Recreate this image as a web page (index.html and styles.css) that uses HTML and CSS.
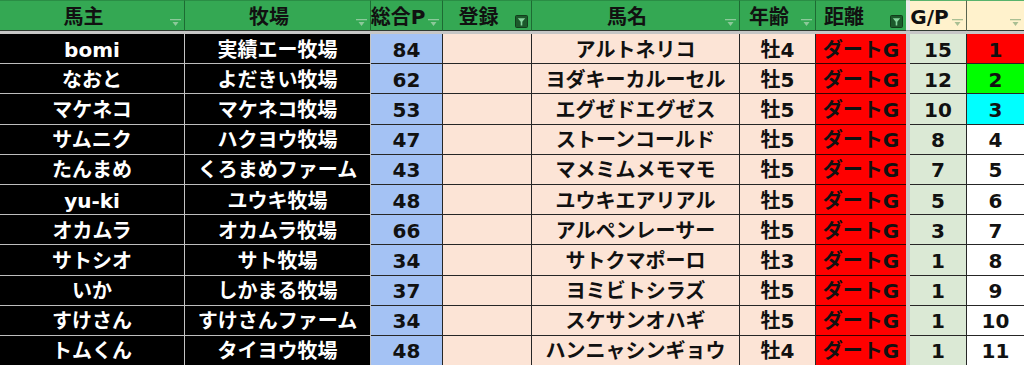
FILE: index.html
```html
<!DOCTYPE html>
<html lang="ja">
<head>
<meta charset="utf-8">
<title>馬主一覧</title>
<link rel="stylesheet" href="styles.css">
</head>
<body>
<div class="sheet">
  <div class="hdr">
    <div class="h g">馬主<svg class="flt" viewBox="0 0 11 8"><rect x="0" y="0" width="11" height="1.3"/><path d="M2.5 3 H8.5 L5.5 7 Z"/></svg></div>
    <div class="h g">牧場<svg class="flt" viewBox="0 0 11 8"><rect x="0" y="0" width="11" height="1.3"/><path d="M2.5 3 H8.5 L5.5 7 Z"/></svg></div>
    <div class="h g">総合P<svg class="flt" viewBox="0 0 11 8"><rect x="0" y="0" width="11" height="1.3"/><path d="M2.5 3 H8.5 L5.5 7 Z"/></svg></div>
    <div class="h g">登録<svg class="btn" viewBox="0 0 13 13"><rect x="0.5" y="0.5" width="12" height="12" rx="1"/><path class="fn" d="M2.8 3.2 H10.2 L7.3 6.8 V10.4 H5.7 V6.8 Z"/></svg></div>
    <div class="h g">馬名<svg class="flt" viewBox="0 0 11 8"><rect x="0" y="0" width="11" height="1.3"/><path d="M2.5 3 H8.5 L5.5 7 Z"/></svg></div>
    <div class="h g">年齢<svg class="flt" viewBox="0 0 11 8"><rect x="0" y="0" width="11" height="1.3"/><path d="M2.5 3 H8.5 L5.5 7 Z"/></svg></div>
    <div class="h g wide">距離<svg class="btn" viewBox="0 0 13 13"><rect x="0.5" y="0.5" width="12" height="12" rx="1"/><path class="fn" d="M2.8 3.2 H10.2 L7.3 6.8 V10.4 H5.7 V6.8 Z"/></svg></div>
    <div class="h gap"></div>
    <div class="h c">G/P<svg class="flt" viewBox="0 0 11 8"><rect x="0" y="0" width="11" height="1.3"/><path d="M2.5 3 H8.5 L5.5 7 Z"/></svg></div>
    <div class="h c last"><svg class="flt" viewBox="0 0 11 8"><rect x="0" y="0" width="11" height="1.3"/><path d="M2.5 3 H8.5 L5.5 7 Z"/></svg></div>
  </div>
  <div class="band"></div>

  <div class="row"><div class="d k">bomi</div><div class="d k">実績エー牧場</div><div class="d b">84</div><div class="d p"></div><div class="d p">アルトネリコ</div><div class="d p">牡4</div><div class="d r">ダートG</div><div class="d gap"></div><div class="d gp">15</div><div class="d rk red">1</div></div>
  <div class="row"><div class="d k">なおと</div><div class="d k">よだきい牧場</div><div class="d b">62</div><div class="d p"></div><div class="d p">ヨダキーカルーセル</div><div class="d p">牡5</div><div class="d r">ダートG</div><div class="d gap"></div><div class="d gp">12</div><div class="d rk grn">2</div></div>
  <div class="row"><div class="d k">マケネコ</div><div class="d k">マケネコ牧場</div><div class="d b">53</div><div class="d p"></div><div class="d p">エグゼドエグゼス</div><div class="d p">牡5</div><div class="d r">ダートG</div><div class="d gap"></div><div class="d gp">10</div><div class="d rk cyn">3</div></div>
  <div class="row"><div class="d k">サムニク</div><div class="d k">ハクヨウ牧場</div><div class="d b">47</div><div class="d p"></div><div class="d p">ストーンコールド</div><div class="d p">牡5</div><div class="d r">ダートG</div><div class="d gap"></div><div class="d gp">8</div><div class="d rk">4</div></div>
  <div class="row"><div class="d k">たんまめ</div><div class="d k">くろまめファーム</div><div class="d b">43</div><div class="d p"></div><div class="d p">マメミムメモマモ</div><div class="d p">牡5</div><div class="d r">ダートG</div><div class="d gap"></div><div class="d gp">7</div><div class="d rk">5</div></div>
  <div class="row"><div class="d k">yu-ki</div><div class="d k">ユウキ牧場</div><div class="d b">48</div><div class="d p"></div><div class="d p">ユウキエアリアル</div><div class="d p">牡5</div><div class="d r">ダートG</div><div class="d gap"></div><div class="d gp">5</div><div class="d rk">6</div></div>
  <div class="row"><div class="d k">オカムラ</div><div class="d k">オカムラ牧場</div><div class="d b">66</div><div class="d p"></div><div class="d p">アルペンレーサー</div><div class="d p">牡5</div><div class="d r">ダートG</div><div class="d gap"></div><div class="d gp">3</div><div class="d rk">7</div></div>
  <div class="row"><div class="d k">サトシオ</div><div class="d k">サト牧場</div><div class="d b">34</div><div class="d p"></div><div class="d p">サトクマポーロ</div><div class="d p">牡3</div><div class="d r">ダートG</div><div class="d gap"></div><div class="d gp">1</div><div class="d rk">8</div></div>
  <div class="row"><div class="d k">いか</div><div class="d k">しかまる牧場</div><div class="d b">37</div><div class="d p"></div><div class="d p">ヨミビトシラズ</div><div class="d p">牡5</div><div class="d r">ダートG</div><div class="d gap"></div><div class="d gp">1</div><div class="d rk">9</div></div>
  <div class="row"><div class="d k">すけさん</div><div class="d k">すけさんファーム</div><div class="d b">34</div><div class="d p"></div><div class="d p">スケサンオハギ</div><div class="d p">牡5</div><div class="d r">ダートG</div><div class="d gap"></div><div class="d gp">1</div><div class="d rk">10</div></div>
  <div class="row"><div class="d k">トムくん</div><div class="d k">タイヨウ牧場</div><div class="d b">48</div><div class="d p"></div><div class="d p">ハンニャシンギョウ</div><div class="d p">牡4</div><div class="d r">ダートG</div><div class="d gap"></div><div class="d gp">1</div><div class="d rk">11</div></div>
</div>
</body>
</html>
```

FILE: styles.css
```css
html, body {
  margin: 0;
  padding: 0;
  background: #ffffff;
}
body {
  font-family: "DejaVu Sans", "Noto Sans CJK JP", sans-serif;
  font-weight: 700;
  font-size: 20px;
  color: #111111;
  overflow: hidden;
}
.sheet {
  width: 1024px;
  display: flex;
  flex-direction: column;
}
.hdr, .row {
  display: grid;
  grid-template-columns: 185px 186px 72px 89px 208px 76px 90px 4px 57px 57px;
}
.hdr {
  height: 31px;
}
.h {
  position: relative;
  box-sizing: border-box;
  display: flex;
  align-items: center;
  justify-content: center;
  padding: 2px 17px 0 0;
  line-height: 1;
  border-top: 1px solid #2a8d45;
  border-bottom: 1px solid #2f3a31;
  white-space: nowrap;
}
.h.g {
  background: #34a853;
  border-right: 1px solid #1d6b33;
}
.h.wide {
  padding-right: 34px;
  border-right: none;
}
.h.gap {
  background: #ececec;
  border-top: 1px solid #cfd8cf;
  border-bottom: 1px solid #8a8a8a;
  padding: 0;
}
.h.c {
  background: #fff2cc;
  border-right: 1px solid #59644f;
  border-top: 1px solid #58b36c;
}
.h.last {
  border-right: none;
}
.flt {
  position: absolute;
  right: 3px;
  top: 18px;
  width: 11px;
  height: 8px;
  fill: #8cc99a;
}
.h.c .flt {
  fill: #a9bf93;
}
.btn {
  position: absolute;
  right: 3px;
  top: 14px;
  width: 13px;
  height: 13px;
}
.btn rect {
  fill: #1c5a2b;
  stroke: #123d1c;
  stroke-width: 1;
}
.btn .fn {
  fill: #86d69e;
}
.band {
  height: 3px;
  background: #c6c6c6;
}
.row {
  height: 30.2px;
}
.d {
  box-sizing: border-box;
  display: flex;
  align-items: center;
  justify-content: center;
  padding-top: 2px;
  line-height: 1;
  white-space: nowrap;
  border-right: 1px solid #262626;
  border-bottom: 1px solid #262626;
  color: #111111;
}
.d.k {
  background: #000000;
  color: #ffffff;
  border-right-color: #c4c4c4;
  border-bottom-color: #bdbdbd;
}
.d.b {
  background: #a4c2f4;
}
.d.p {
  background: #fce4d6;
}
.d.r {
  background: #ff0000;
  border-right: none;
  border-bottom-color: #3a0000;
}
.d.gap {
  background: #c6c6c6;
  border: none;
}
.d.gp {
  background: #dbe9d5;
}
.d.rk {
  background: #ffffff;
  border-right: none;
}
.d.red {
  background: #ff0000;
}
.d.grn {
  background: #00ff00;
}
.d.cyn {
  background: #00ffff;
}
```
